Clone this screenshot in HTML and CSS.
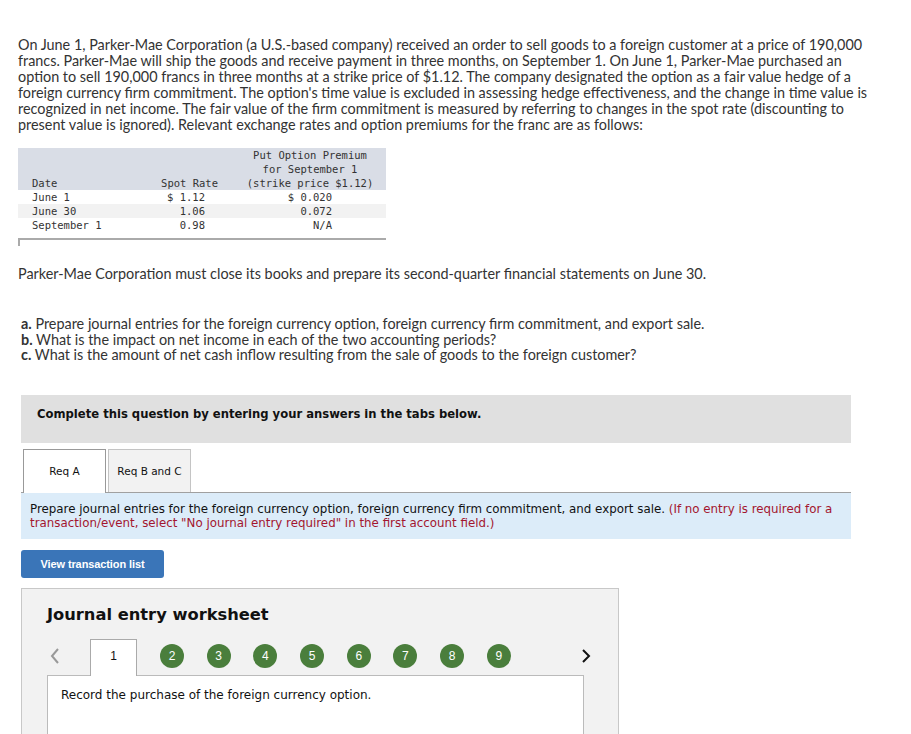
FILE: index.html
```html
<!DOCTYPE html>
<html lang="en">
<head>
    <meta charset="UTF-8">
    <title>Foreign Currency Option</title>
    <link rel="stylesheet" href="styles.css">
</head>
<body>

<div class="question">
    <p class="intro">On June 1, Parker-Mae Corporation (a U.S.-based company) received an order to sell goods to a foreign customer at a price of 190,000 francs. Parker-Mae will ship the goods and receive payment in three months, on September 1. On June 1, Parker-Mae purchased an option to sell 190,000 francs in three months at a strike price of $1.12. The company designated the option as a fair value hedge of a foreign currency firm commitment. The option's time value is excluded in assessing hedge effectiveness, and the change in time value is recognized in net income. The fair value of the firm commitment is measured by referring to changes in the spot rate (discounting to present value is ignored). Relevant exchange rates and option premiums for the franc are as follows:</p>

    <table class="rates">
        <colgroup>
            <col class="col-date">
            <col class="col-spot">
            <col class="col-prem">
        </colgroup>
        <tr class="head">
            <td class="c-date">Date</td>
            <td class="c-spot">Spot Rate</td>
            <td class="c-prem">Put Option Premium<br>for September 1<br>(strike price $1.12)</td>
        </tr>
        <tr>
            <td class="c-date">June 1</td>
            <td class="v-spot">$ 1.12</td>
            <td class="v-prem">$ 0.020</td>
        </tr>
        <tr class="alt">
            <td class="c-date">June 30</td>
            <td class="v-spot">1.06</td>
            <td class="v-prem">0.072</td>
        </tr>
        <tr>
            <td class="c-date">September 1</td>
            <td class="v-spot">0.98</td>
            <td class="v-prem">N/A</td>
        </tr>
    </table>
    <div class="table-end"></div>

    <p class="close-note">Parker-Mae Corporation must close its books and prepare its second-quarter financial statements on June 30.</p>

    <ul class="tasks">
        <li><b>a.</b> Prepare journal entries for the foreign currency option, foreign currency firm commitment, and export sale.</li>
        <li><b>b.</b> What is the impact on net income in each of the two accounting periods?</li>
        <li><b>c.</b> What is the amount of net cash inflow resulting from the sale of goods to the foreign customer?</li>
    </ul>
</div>

<div class="answer">
    <div class="complete-bar">Complete this question by entering your answers in the tabs below.</div>

    <div class="tabs">
        <div class="tab active">Req A</div>
        <div class="tab">Req B and C</div>
    </div>

    <div class="instructions">
        Prepare journal entries for the foreign currency option, foreign currency firm commitment, and export sale. <span class="note">(If no entry is required for a transaction/event, select "No journal entry required" in the first account field.)</span>
    </div>

    <button class="view-list">View transaction list</button>

    <div class="worksheet">
        <h3>Journal entry worksheet</h3>
        <div class="steps">
            <span class="arrow prev">
                <svg width="10" height="16" viewBox="0 0 10 16"><path d="M8 1 L2 8 L8 15" fill="none" stroke="#999" stroke-width="2"/></svg>
            </span>
            <div class="step current">1</div>
            <div class="step">2</div>
            <div class="step">3</div>
            <div class="step">4</div>
            <div class="step">5</div>
            <div class="step">6</div>
            <div class="step">7</div>
            <div class="step">8</div>
            <div class="step">9</div>
            <span class="arrow next">
                <svg width="10" height="16" viewBox="0 0 10 16"><path d="M2 2 L8 8 L2 14" fill="none" stroke="#111" stroke-width="2"/></svg>
            </span>
        </div>
        <div class="entry-box">
            Record the purchase of the foreign currency option.
        </div>
    </div>
</div>

</body>
</html>
```

FILE: styles.css
```css
body {
    margin: 0;
    padding: 0;
    background: #fff;
    color: #333;
    font-family: 'Lato', sans-serif;
}

.question {
    padding: 37px 0 0 18px;
    font-size: 14.4px;
}

.intro {
    margin: 0;
    width: 850px;
    line-height: 16px;
}

.rates {
    margin-top: 15px;
    width: 368px;
    table-layout: fixed;
    border-collapse: collapse;
    font-family: 'DejaVu Sans Mono', monospace;
    font-size: 10.5px;
    line-height: 14px;
    color: #333;
}

.col-date {
    width: 122px;
}

.col-spot {
    width: 86px;
}

.col-prem {
    width: 160px;
}

.rates td {
    padding: 0;
    vertical-align: bottom;
    white-space: nowrap;
}

.rates .head {
    background: #d9dde6;
}

.rates .alt {
    background: #f2f2f2;
}

.rates .c-date {
    padding-left: 14px;
}

.rates .c-spot {
    text-align: right;
    padding-right: 8px;
}

.rates .c-prem {
    text-align: center;
    padding-left: 8px;
}

.rates .v-spot {
    text-align: right;
    padding-right: 21px;
}

.rates .v-prem {
    text-align: right;
    padding-right: 54px;
}

.table-end {
    width: 366px;
    height: 6px;
    margin-top: 6px;
    border-top: 2px solid #aaa;
    border-left: 2px solid #aaa;
}

.close-note {
    margin: 20px 0 0;
    line-height: 16px;
}

.tasks {
    list-style: none;
    margin: 34px 0 0;
    padding: 0 0 0 3px;
    line-height: 15.5px;
}

.answer {
    padding: 32px 0 0 21px;
    font-family: 'DejaVu Sans', sans-serif;
    color: #111;
}

.complete-bar {
    width: 814px;
    height: 48px;
    padding-left: 16px;
    background: #e0e0e0;
    font-size: 11.6px;
    font-weight: bold;
    line-height: 38px;
}

.tabs {
    display: flex;
    gap: 2px;
    margin-top: 6px;
    padding-left: 2px;
    border-bottom: 1px solid #a0a0a0;
    width: 828px;
}

.tab {
    width: 81px;
    height: 42px;
    line-height: 42px;
    text-align: center;
    font-size: 10.5px;
    border: 1px solid #c4c4c4;
    border-bottom: none;
    background: #f2f2f2;
    margin-bottom: -1px;
}

.tab.active {
    background: #fff;
    border-color: #999;
    height: 43px;
}

.instructions {
    width: 812px;
    padding: 9px;
    background: #dcecf9;
    font-size: 11.85px;
    line-height: 14px;
    color: #111;
}

.instructions .note {
    color: #a3162f;
}

.view-list {
    display: block;
    margin-top: 11px;
    width: 143px;
    height: 28px;
    border: none;
    border-radius: 3px;
    background: #3a75b8;
    color: #fff;
    font-family: 'Liberation Sans', sans-serif;
    font-weight: bold;
    font-size: 11px;
    letter-spacing: -0.1px;
    cursor: pointer;
}

.worksheet {
    margin-top: 10px;
    width: 596px;
    height: 160px;
    background: #f2f2f2;
    border: 1px solid #c8c8c8;
}

.worksheet h3 {
    margin: 14px 0 0 25px;
    font-size: 16.3px;
    line-height: 24px;
    color: #111;
}

.steps {
    display: flex;
    align-items: center;
    height: 37px;
    margin-top: 11px;
    padding-left: 28px;
}

.arrow {
    display: flex;
    align-items: center;
}

.arrow.prev {
    width: 40px;
}

.arrow.next {
    margin-left: 47px;
}

.step {
    width: 24px;
    height: 24px;
    border-radius: 50%;
    background: #4a7e3c;
    color: #fff;
    font-family: 'Liberation Sans', sans-serif;
    font-size: 12px;
    line-height: 24px;
    text-align: center;
    margin-right: 22.7px;
}

.step.current {
    width: 45px;
    height: 36px;
    border-radius: 0;
    background: #fff;
    color: #111;
    border: 1px solid #aaa;
    border-bottom: none;
    line-height: 32px;
    align-self: flex-end;
    margin-bottom: -1px;
    margin-right: 23px;
    position: relative;
}

.entry-box {
    width: 522px;
    height: 60px;
    margin-left: 25px;
    padding: 12px 0 0 13px;
    background: #fff;
    border: 1px solid #bbb;
    font-size: 12px;
    color: #111;
}
```
